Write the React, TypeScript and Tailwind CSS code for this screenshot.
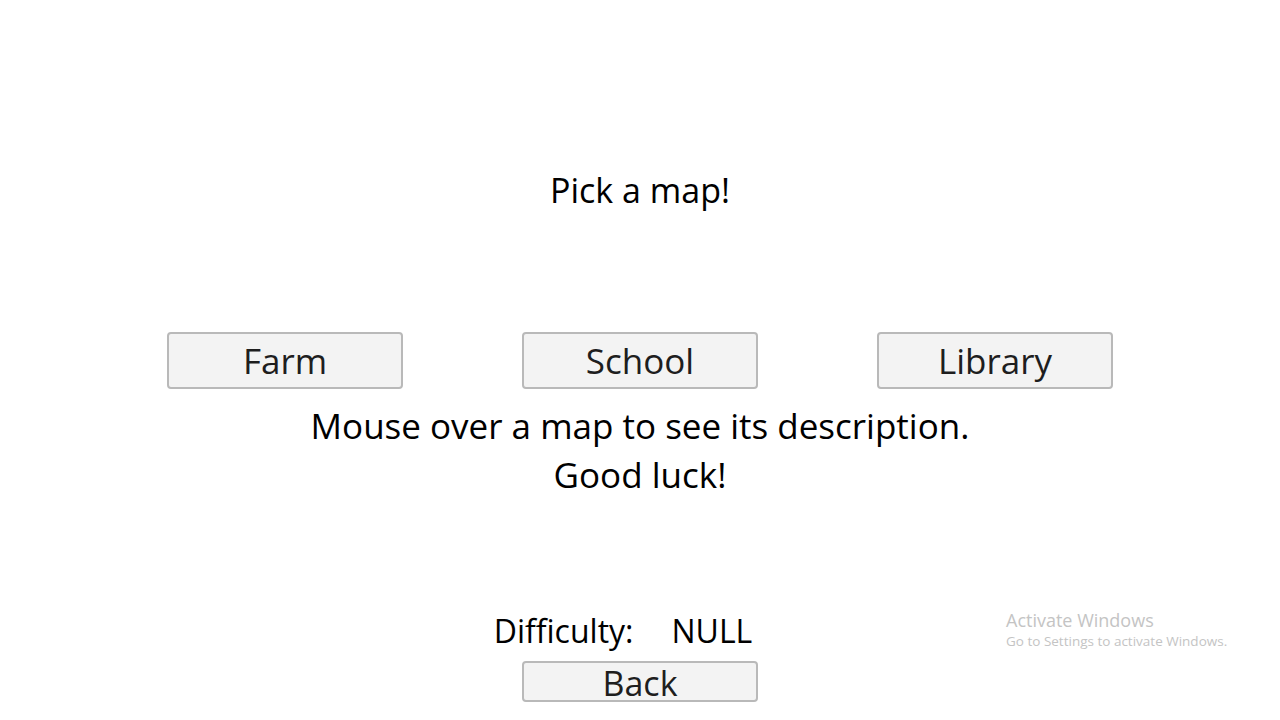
const font = "font-['Comic_Sans_MS','Open_Sans','DejaVu_Sans',sans-serif]";

function MapButton({ label, className = '' }: { label: string; className?: string }) {
  return (
    <button
      className={`w-[236px] rounded-[4px] border-2 border-[#b9b9b9] bg-[#f3f3f3] text-[#1e1e1e] leading-none ${className}`}
    >
      {label}
    </button>
  );
}

export default function App() {
  return (
    <div className={`relative flex h-[720px] w-[1280px] flex-col items-center bg-white text-black ${font}`}>
      <h1 className="mt-[169px] text-[34px] leading-[42px] font-normal">Pick a map!</h1>

      <div className="mt-[121px] flex gap-[119px]">
        <MapButton label="Farm" className="h-[57px] text-[35px]" />
        <MapButton label="School" className="h-[57px] text-[35px]" />
        <MapButton label="Library" className="h-[57px] text-[35px]" />
      </div>

      <div className="mt-[12px] flex flex-col items-center text-[35px] leading-[49px]">
        <p>Mouse over a map to see its description.</p>
        <p>Good luck!</p>
      </div>

      <div className="mt-[114px] mr-[34px] flex items-center gap-[38px] text-[32px] leading-[36px]">
        <span>Difficulty:</span>
        <span>NULL</span>
      </div>

      <MapButton label="Back" className="mt-[12px] h-[41px] pt-[3px] text-[34px]" />

      {/* system watermark in the corner */}
      <div className="absolute left-[1006px] top-[609px] font-['Open_Sans',sans-serif] text-[#c4c4c4]">
        <div className="text-[18px] leading-[22px]">Activate Windows</div>
        <div className="text-[13.5px] leading-[20px]">Go to Settings to activate Windows.</div>
      </div>
    </div>
  );
}
